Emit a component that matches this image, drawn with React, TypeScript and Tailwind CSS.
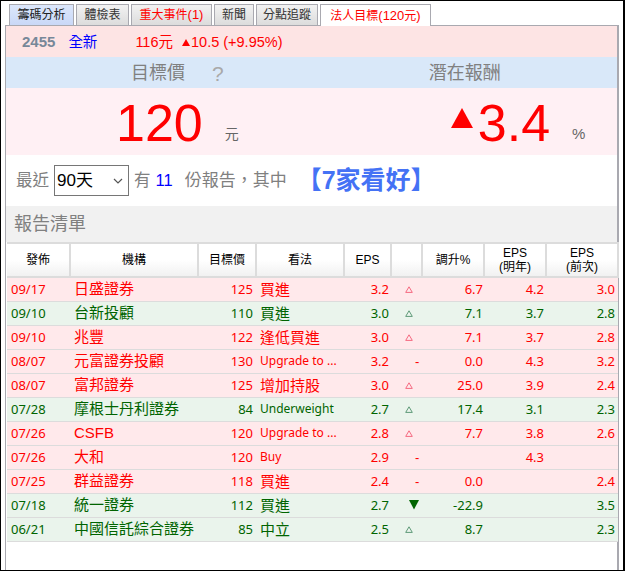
const tabs = [
  { label: "籌碼分析", suffix: "", cls: "w-[65px] bg-gradient-to-b from-[#dce7fb] to-[#c9d8f7] text-[#222]" },
  { label: "體檢表", suffix: "", cls: "w-[53px] bg-gradient-to-b from-[#f2f2f2] to-[#dcdcdc] text-[#333]" },
  { label: "重大事件", suffix: "(1)", cls: "w-[81px] bg-gradient-to-b from-[#f2f2f2] to-[#dcdcdc] text-[#f00]" },
  { label: "新聞", suffix: "", cls: "w-[40px] bg-gradient-to-b from-[#f2f2f2] to-[#dcdcdc] text-[#333]" },
  { label: "分點追蹤", suffix: "", cls: "w-[62px] bg-gradient-to-b from-[#f2f2f2] to-[#dcdcdc] text-[#333]" },
];

type Row = [string, string, string, string, string, string, string, string, string];

const rows: Row[] = [
  ["09/17", "日盛證券", "125", "買進", "3.2", "up", "6.7", "4.2", "3.0"],
  ["09/10", "台新投顧", "110", "買進", "3.0", "up", "7.1", "3.7", "2.8"],
  ["09/10", "兆豐", "122", "逢低買進", "3.0", "up", "7.1", "3.7", "2.8"],
  ["08/07", "元富證券投顧", "130", "Upgrade to ...", "3.2", "-", "0.0", "4.3", "3.2"],
  ["08/07", "富邦證券", "125", "增加持股", "3.0", "up", "25.0", "3.9", "2.4"],
  ["07/28", "摩根士丹利證券", "84", "Underweight", "2.7", "up", "17.4", "3.1", "2.3"],
  ["07/26", "CSFB", "120", "Upgrade to ...", "2.8", "up", "7.7", "3.8", "2.6"],
  ["07/26", "大和", "120", "Buy", "2.9", "-", "", "4.3", ""],
  ["07/25", "群益證券", "118", "買進", "2.4", "-", "0.0", "", "2.4"],
  ["07/18", "統一證券", "112", "買進", "2.7", "down", "-22.9", "", "3.5"],
  ["06/21", "中國信託綜合證券", "85", "中立", "2.5", "up", "8.7", "", "2.3"],
];

const greens = [1, 5, 9, 10];

function Arrow({ kind, green }: { kind: string; green: boolean }) {
  if (kind === "-") {
    return <div className="pl-[24px] text-[13px] leading-none">-</div>;
  }
  if (kind === "down") {
    return (
      <svg width="10" height="10" viewBox="0 0 10 10" className="ml-[18px] block">
        <path d="M0 0H10L5 9.5Z" fill="#006400" />
      </svg>
    );
  }
  return (
    <svg width="8" height="7" viewBox="0 0 8 7" className="ml-[14px] block">
      <path d="M4 .8L7.3 6.4H.7Z" fill="none" stroke={green ? "#5f9a78" : "#f56a80"} strokeWidth="1" />
    </svg>
  );
}

function Th({ children, cls = "" }: { children: React.ReactNode; cls?: string }) {
  return (
    <th className={`border-r-2 border-b-2 border-[#dcdcdc] bg-gradient-to-b from-white from-50% to-[#f1f1f1] p-0 text-center text-[12px] leading-[14px] font-normal text-black ${cls}`}>
      {children}
    </th>
  );
}

export default function App() {
  return (
    <div className="box-border h-[571px] w-[625px] overflow-hidden border border-r-[2px] border-black bg-white pt-[3px] pr-[4px] pl-1 font-['Liberation_Sans','Noto_Sans_CJK_TC',sans-serif]">
      {/* Tabs */}
      <div className="flex h-[21px] gap-[2px] pl-[4px]">
        {tabs.map((t) => (
          <div key={t.label} className={`flex items-center justify-center border border-b-0 border-[#a9a9b0] text-[12px] ${t.cls}`}>
            {t.label}
            {t.suffix && <span className="text-[13px]">{t.suffix}</span>}
          </div>
        ))}
        <div className="z-10 flex h-[22px] w-[111px] items-center justify-center border border-b-0 border-[#a9a9b0] bg-white text-[12px] text-[#f00]">
          法人目標<span className="text-[13px]">(120</span>元<span className="text-[13px]">)</span>
        </div>
      </div>

      <div className="h-[600px] border-t border-r-2 border-l border-[#a9a9b0] bg-white">
        {/* Quote */}
        <div className="flex h-[31px] items-center bg-[#fde4e4] pt-[2px] text-[14.5px]">
          <span className="ml-[16px] text-[15px] font-bold text-[#778899]">2455</span>
          <span className="ml-[13px] text-[#0000ff]">全新</span>
          <span className="ml-[38px] text-[#f00]">116元</span>
          <svg width="8" height="7" viewBox="0 0 8 7" className="ml-[9px]">
            <path d="M4 0L8 7H0Z" fill="#f00" />
          </svg>
          <span className="ml-[1px] text-[#f00]">10.5 (+9.95%)</span>
        </div>

        {/* Labels */}
        <div className="flex h-[31px] items-center bg-[#d9e8f9] pt-[2px] text-[18px] text-[#808080]">
          <span className="ml-[125px]">目標價</span>
          <span className="ml-[27px] text-[21px] leading-none text-[#a9a9a9]">?</span>
          <span className="ml-[205px]">潛在報酬</span>
        </div>

        {/* Values */}
        <div className="flex h-[67px] items-center bg-[#fff0f4]">
          <span className="mt-[2px] ml-[110px] text-[52px] leading-none text-[#f00]">120</span>
          <span className="mt-[26px] ml-[22px] text-[14px] text-[#666]">元</span>
          <svg width="22" height="20" viewBox="0 0 22 20" className="mb-[8px] ml-[212px]">
            <path d="M11 0L22 20H0Z" fill="#f00" />
          </svg>
          <span className="mt-[2px] ml-[5px] text-[52px] leading-none text-[#f00]">3.4</span>
          <span className="mt-[26px] ml-[22px] text-[15px] text-[#666]">%</span>
        </div>

        {/* Summary */}
        <div className="flex h-[51px] items-center text-[16.5px] text-[#808080]">
          <span className="ml-[10px]">最近</span>
          <div className="ml-[5px] flex h-[31px] w-[75px] items-center justify-between border border-[#767676] pr-[5px] pl-[2px] text-[17px] text-black">
            <span>90天</span>
            <svg width="10" height="6" viewBox="0 0 10 6">
              <path d="M1 1L5 5L9 1" fill="none" stroke="#555" strokeWidth="1.2" />
            </svg>
          </div>
          <span className="ml-[5px]">有</span>
          <span className="ml-[5px] text-[#0000ff]">11</span>
          <span className="ml-[12px] text-[17px]">份報告，其中</span>
          <span className="ml-[10px] text-[25px] font-bold text-[#4472f5]">【7家看好】</span>
        </div>

        {/* List title */}
        <div className="flex h-[36px] items-center bg-[#f1f1f1] pl-[8px] text-[18px] text-[#808080]">報告清單</div>

        {/* Table */}
        <table className="ml-px w-[611px] table-fixed border-collapse">
          <colgroup>
            <col className="w-[63px]" />
            <col className="w-[128px]" />
            <col className="w-[58px]" />
            <col className="w-[88px]" />
            <col className="w-[47px]" />
            <col className="w-[31px]" />
            <col className="w-[62px]" />
            <col className="w-[62px]" />
            <col className="w-[72px]" />
          </colgroup>
          <thead>
            <tr className="h-[34px] border-t-2 border-[#dcdcdc]">
              <Th>發佈</Th>
              <Th>機構</Th>
              <Th>目標價</Th>
              <Th>看法</Th>
              <Th>EPS</Th>
              <Th> </Th>
              <Th>調升%</Th>
              <Th>EPS<br />(明年)</Th>
              <Th cls="border-r-0">EPS<br />(前次)</Th>
            </tr>
          </thead>
          <tbody>
            {rows.map((r, i) => {
              const green = greens.includes(i);
              return (
                <tr key={i} className={`h-[24px] border-b border-[#dcdcdc] text-[13px] ${green ? "bg-[#eaf4ec] text-[#006400]" : "bg-[#ffe9eb] text-[#f00]"}`}>
                  <td className="p-0 pt-px pl-[4px] font-['Noto_Sans',sans-serif]">{r[0]}</td>
                  <td className="p-0 pl-[4px] text-[15px]">{r[1]}</td>
                  <td className="p-0 pt-px pr-[3px] text-right font-['Noto_Sans',sans-serif]">{r[2]}</td>
                  <td className="truncate p-0 pl-[4px] font-['Noto_Sans','Noto_Sans_CJK_TC',sans-serif] text-[12px]">
                    <span className={/[a-zA-Z]/.test(r[3]) ? "" : "text-[15px]"}>{r[3]}</span>
                  </td>
                  <td className="p-0 pt-px pr-[2px] text-right font-['Noto_Sans',sans-serif]">{r[4]}</td>
                  <td className="p-0"><Arrow kind={r[5]} green={green} /></td>
                  <td className="p-0 pt-px pr-[1px] text-right font-['Noto_Sans',sans-serif]">{r[6]}</td>
                  <td className="p-0 pt-px pr-[2px] text-right font-['Noto_Sans',sans-serif]">{r[7]}</td>
                  <td className="p-0 pt-px pr-[3px] text-right font-['Noto_Sans',sans-serif]">{r[8]}</td>
                </tr>
              );
            })}
          </tbody>
        </table>
      </div>
    </div>
  );
}
